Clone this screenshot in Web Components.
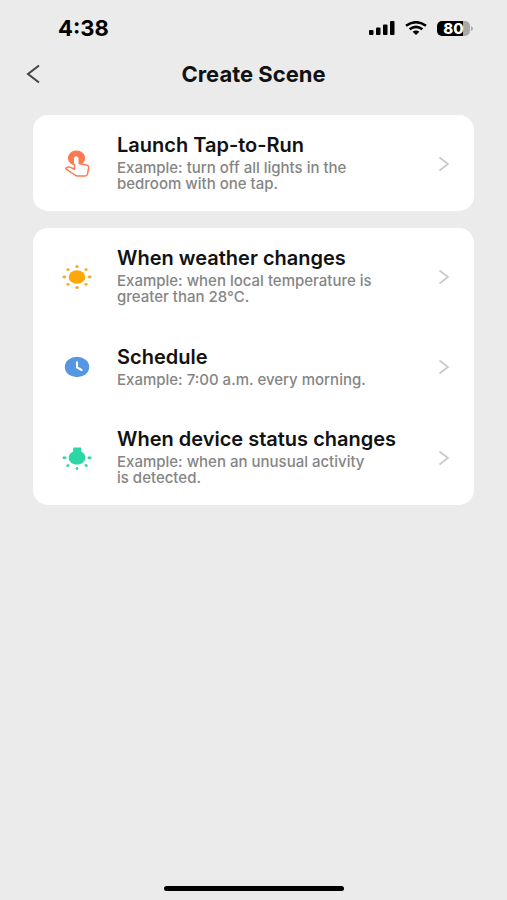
<!DOCTYPE html>
<html lang="en">
<head>
<meta charset="utf-8">
<meta name="viewport" content="width=device-width, initial-scale=1">
<title>Create Scene</title>
<style>
  html, body { margin: 0; min-height: 100%; background: #ebebeb; }
  body { font-family: Inter, "Liberation Sans", sans-serif; color: #121212; }
</style>
</head>
<body>
<scene-screen>
  <status-bar slot="status" time="4:38" battery="80"></status-bar>
  <nav-header slot="header">Create Scene</nav-header>
  <scene-card>
    <scene-option icon="tap">Launch Tap-to-Run<span slot="example">Example: turn off all lights in the<br>bedroom with one tap.</span></scene-option>
  </scene-card>
  <scene-card>
    <scene-option icon="weather">When weather changes<span slot="example">Example: when local temperature is<br>greater than 28°C.</span></scene-option>
    <scene-option icon="clock">Schedule<span slot="example">Example: 7:00 a.m. every morning.</span></scene-option>
    <scene-option icon="device">When device status changes<span slot="example">Example: when an unusual activity<br>is detected.</span></scene-option>
  </scene-card>
</scene-screen>

<script>
const define = (name, render) => customElements.define(name, class extends HTMLElement {
  constructor() {
    super();
    this.attachShadow({ mode: 'open' }).innerHTML = render(this);
  }
});

define('scene-screen', () => `
  <style>
    :host { display: flex; flex-direction: column; min-height: 100vh; }
    main { flex: 1; display: flex; flex-direction: column; gap: 17px; padding: 15px 33px; }
    footer { display: flex; justify-content: center; padding-bottom: 9px; }
    .home { width: 180px; height: 5px; border-radius: 3px; background: #000; }
  </style>
  <slot name="status"></slot>
  <slot name="header"></slot>
  <main><slot></slot></main>
  <footer><div class="home"></div></footer>`);

define('status-bar', el => `
  <style>
    :host { display: flex; align-items: center; justify-content: space-between; height: 48px; padding: 8px 34px 0 58px; box-sizing: border-box; color: #000; }
    time { font-size: 22px; line-height: 24px; font-weight: 700; }
    .icons { display: flex; align-items: center; gap: 10px; }
    svg { display: block; }
    .battery { display: flex; align-items: center; gap: 1px; }
    .level { width: 33px; height: 15px; border-radius: 5px; background: linear-gradient(90deg, #000 80%, #a9a9a9 80%); color: #fff; font-size: 15px; line-height: 15px; font-weight: 800; text-align: center; }
  </style>
  <time>${el.getAttribute('time')}</time>
  <div class="icons">
    <svg width="26" height="14" viewBox="0 0 26 14" aria-label="Signal">
      <rect x="0" y="9" width="4.500" height="5" rx="1"/><rect x="7" y="6.500" width="4.500" height="7.500" rx="1"/>
      <rect x="14" y="3.500" width="4.500" height="10.500" rx="1"/><rect x="21" y="0" width="4.500" height="14" rx="1"/>
    </svg>
    <svg width="22" height="14" viewBox="0 0 22 14" aria-label="Wi-Fi">
      <g fill="none" stroke="#000" stroke-width="2.500"><path d="M1 4.800Q11-2.400 21 4.800"/><path d="M4.600 8.300Q11 3.500 17.400 8.300"/></g>
      <path d="M7.600 10.800Q11 8.100 14.400 10.800L11 14Z"/>
    </svg>
    <div class="battery">
      <div class="level">${el.getAttribute('battery')}</div>
      <svg width="2" height="5" viewBox="0 0 2 5"><path d="M0 0Q2 1 2 2.500T0 5Z" fill="#a9a9a9"/></svg>
    </div>
  </div>`);

define('nav-header', () => `
  <style>
    :host { display: grid; grid-template-columns: 50px 1fr 50px; align-items: center; height: 52px; padding: 0 8px; }
    button { display: flex; align-items: center; justify-content: center; height: 44px; padding: 0; border: 0; background: none; }
    h1 { margin: 0; font-size: 22px; line-height: 24px; font-weight: 700; text-align: center; }
  </style>
  <button aria-label="Back"><svg width="16" height="20" viewBox="0 0 16 20"><path d="M14 1.500L3 10l11 8.500" fill="none" stroke="#444" stroke-width="2"/></svg></button>
  <h1><slot></slot></h1>`);

define('scene-card', () => `
  <style>
    :host { display: block; border-radius: 15px; background: #fff; overflow: hidden; }
  </style>
  <slot></slot>`);

const icons = {
  tap: `<ellipse cx="15.500" cy="10" rx="8.700" ry="7.500" fill="#fb7a50"/>
    <path d="M13.500 20V10.300Q13.500 8.700 15.200 8.700T17 10.300V15.300L26 17.200Q28 17.800 27.700 19.700L26.500 26.200Q26.100 28 24 28H16.500Q15 28 13.800 27L5.300 21.200Q4.200 20 5.900 19.400Q7.500 18.800 9.500 19.400L13.500 21.200Z" fill="#fff" stroke="#fb7a50" stroke-width="1.500" stroke-linejoin="round"/>
    <path d="M13.500 16V10.300Q13.500 8.700 15.200 8.700T17 10.300V16" fill="#fff" stroke="#fff" stroke-width="1"/>`,
  weather: `<ellipse cx="16" cy="16" rx="8.300" ry="6.800" fill="#ffa707"/>
    <g fill="#f8ab2b"><ellipse cx="16" cy="5.600" rx="1.700" ry="1.500"/><ellipse cx="16" cy="26.400" rx="1.700" ry="1.500"/>
    <ellipse cx="3.300" cy="16" rx="2" ry="1.400"/><ellipse cx="28.700" cy="16" rx="2" ry="1.400"/>
    <ellipse cx="7" cy="8.700" rx="1.600" ry="1.400"/><ellipse cx="25" cy="8.700" rx="1.600" ry="1.400"/>
    <ellipse cx="7" cy="23.300" rx="1.600" ry="1.400"/><ellipse cx="25" cy="23.300" rx="1.600" ry="1.400"/></g>`,
  clock: `<ellipse cx="16" cy="16" rx="12.200" ry="10.200" fill="#5597e2"/>
    <path d="M16 11.300V16.500L20.600 19" fill="none" stroke="#fff" stroke-width="2" stroke-linecap="round"/>`,
  device: `<path d="M13 5.500h6.500q.8 0 .8.800V9.500Q24.300 11.500 24.300 15.700C24.300 19.500 20.600 22.500 16 22.500S7.700 19.500 7.700 15.700Q7.700 11.500 12.200 9.500V6.300Q12.200 5.500 13 5.500Z" fill="#2cd7a6"/>
    <g stroke="#2cd7a6" stroke-width="2.400" stroke-linecap="round"><path d="M2.700 15.800h1.600M27.700 15.800h1.600M7.300 23.200l-.800.600M24.700 23.200l.800.600M16 26.100v.600"/></g>`
};

define('scene-option', el => `
  <style>
    :host { display: block; }
    button { display: grid; grid-template-columns: 32px 1fr 12px; align-items: center; column-gap: 24px; width: 100%; min-height: 85px; padding: 20px 24px 19px 28px; border: 0; background: none; color: inherit; font-family: inherit; text-align: left; }
    svg { display: block; }
    .text { display: flex; flex-direction: column; gap: 4px; }
    .title { font-size: 20px; line-height: 21px; font-weight: 600; }
    .example { font-size: 15px; line-height: 16px; font-weight: 500; color: #858585; }
  </style>
  <button>
    <svg width="32" height="32" viewBox="0 0 32 32" aria-hidden="true">${icons[el.getAttribute('icon')]}</svg>
    <span class="text">
      <span class="title"><slot></slot></span>
      <span class="example"><slot name="example"></slot></span>
    </span>
    <svg width="12" height="16" viewBox="0 0 12 16" aria-hidden="true"><path d="M1.500 1.500L10 8l-8.500 6.500" fill="none" stroke="#c9c9c9" stroke-width="1.700"/></svg>
  </button>`);
</script>
</body>
</html>
